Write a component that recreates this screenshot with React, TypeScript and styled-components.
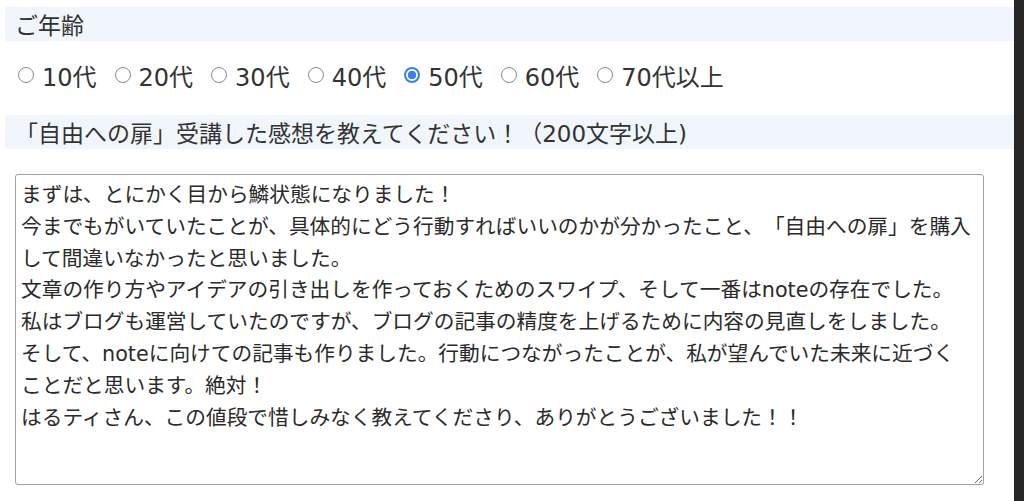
import React, { useState } from 'react';
import styled, { createGlobalStyle } from 'styled-components';

const GlobalStyle = createGlobalStyle`
  html, body {
    margin: 0;
    padding: 0;
    background: #ffffff;
  }
  body {
    font-family: "DejaVu Sans", "Noto Sans CJK JP", sans-serif;
    color: #333333;
    text-spacing-trim: space-all;
  }
`;

const Screen = styled.div`
  display: flex;
  height: 501px;
  overflow: hidden;
`;

const Form = styled.div`
  flex: 1;
  padding: 7px 0 0 5px;
`;

const Edge = styled.div`
  width: 10px;
  background: #262626;
`;

const Label = styled.div<{ $gap?: number }>`
  height: 34px;
  margin-top: ${props => props.$gap ?? 0}px;
  padding-left: 10px;
  display: flex;
  align-items: center;
  background: #f1f6fd;
  font-size: 23px;
  color: #333333;
`;

const Options = styled.div`
  display: flex;
  align-items: center;
  height: 32px;
  padding: 18px 0 0 13px;
  gap: 18px;
`;

const Option = styled.label`
  display: flex;
  align-items: center;
  gap: 8px;
  font-size: 24px;
  color: #333333;
  cursor: pointer;
`;

const Radio = styled.input.attrs({ type: 'radio' })`
  appearance: none;
  margin: 0;
  width: 16px;
  height: 16px;
  border-radius: 50%;
  border: 1px solid #8a8a8a;
  background: #ffffff;
  box-sizing: border-box;

  &:checked {
    border: 2px solid #3a7ff6;
    background: radial-gradient(circle, #3a7ff6 0 4px, #ffffff 4.5px);
  }
`;

const Answer = styled.textarea`
  display: block;
  box-sizing: border-box;
  margin: 25px 0 0 10px;
  width: 969px;
  height: 311px;
  padding: 5px 10.5px 4px 5px;
  border: 1px solid #a0a0a0;
  border-radius: 3px;
  font-family: "DejaVu Sans", "Noto Sans CJK JP", sans-serif;
  font-size: 20.7px;
  line-height: 31.8px;
  color: #2a2a2a;
  text-spacing-trim: space-all;
  resize: vertical;
  outline: none;
`;

const ages = ['10代', '20代', '30代', '40代', '50代', '60代', '70代以上'];

const impression = [
  'まずは、とにかく目から鱗状態になりました！',
  '今までもがいていたことが、具体的にどう行動すればいいのかが分かったこと、「自由への扉」を購入して間違いなかったと思いました。',
  '文章の作り方やアイデアの引き出しを作っておくためのスワイプ、そして一番はnoteの存在でした。',
  '私はブログも運営していたのですが、ブログの記事の精度を上げるために内容の見直しをしました。',
  'そして、noteに向けての記事も作りました。行動につながったことが、私が望んでいた未来に近づくことだと思います。絶対！',
  'はるティさん、この値段で惜しみなく教えてくださり、ありがとうございました！！',
].join('\n');

export default function App() {
  const [age, setAge] = useState('50代');
  const [text, setText] = useState(impression);

  return (
    <Screen>
      <GlobalStyle />
      <Form>
        <Label>ご年齢</Label>
        <Options>
          {ages.map(a => (
            <Option key={a}>
              <Radio name="age" checked={age === a} onChange={() => setAge(a)} />
              {a}
            </Option>
          ))}
        </Options>
        <Label $gap={24}>「自由への扉」受講した感想を教えてください！（200文字以上)</Label>
        <Answer value={text} onChange={e => setText(e.target.value)} />
      </Form>
      <Edge />
    </Screen>
  );
}
